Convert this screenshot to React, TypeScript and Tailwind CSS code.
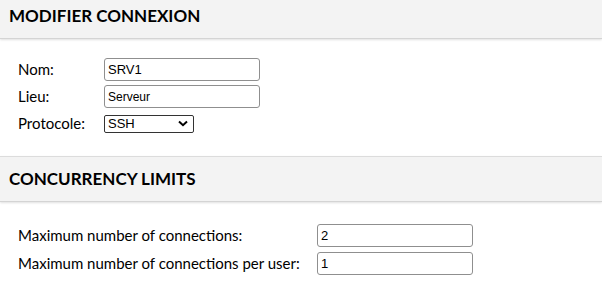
import React from "react";

function Field({ value, width, small }: { value: string; width: string; small?: boolean }) {
  return (
    <input
      readOnly
      defaultValue={value}
      className={`${width} h-[23px] border border-[#8f8f8f] rounded-[3px] bg-white px-[3px] text-black font-['Liberation_Sans',Arial,sans-serif] ${small ? "text-[12px]" : "text-[13px]"} outline-none`}
    />
  );
}

export default function App() {
  return (
    <div className="w-[602px] h-[291px] bg-white overflow-hidden font-['Lato',sans-serif] text-black">
      <div className="h-[39px] bg-[#f3f3f3] border-b border-[#d4d4d4] shadow-[0_1px_2px_rgba(0,0,0,0.12)] flex items-center px-[9px] pb-[6px]">
        <h2 className="text-[17px] font-bold uppercase">Modifier connexion</h2>
      </div>
      <div className="pt-[17px] pb-[19px] pl-[18px]">
        <div className="flex items-center h-[27px]">
          <div className="w-[86px] text-[15px]">Nom:</div>
          <Field value="SRV1" width="w-[156px]" />
        </div>
        <div className="flex items-center h-[27px]">
          <div className="w-[86px] text-[15px]">Lieu:</div>
          <Field value="Serveur" width="w-[156px]" small />
        </div>
        <div className="flex items-center h-[27px]">
          <div className="w-[86px] text-[15px]">Protocole:</div>
          <div className="w-[90px] h-[18px] border border-[#333] rounded-[2px] flex items-center justify-between pl-[3px] pr-[5px] font-['Liberation_Sans',Arial,sans-serif] text-[13px]">
            <span>SSH</span>
            <svg width="10" height="7" viewBox="0 0 10 7">
              <path d="M1 1.5 L5 5.2 L9 1.5" fill="none" stroke="#000" strokeWidth="2" />
            </svg>
          </div>
        </div>
      </div>
      <div className="h-[46px] bg-[#f3f3f3] border-t border-[#dcdcdc] border-b border-b-[#d4d4d4] shadow-[0_1px_2px_rgba(0,0,0,0.12)] flex items-center px-[9px]">
        <h2 className="text-[17px] font-bold uppercase">Concurrency limits</h2>
      </div>
      <div className="pt-[19px] pl-[18px]">
        <div className="flex items-center h-[28px]">
          <div className="w-[299px] text-[15px]">Maximum number of connections:</div>
          <Field value="2" width="w-[156px]" />
        </div>
        <div className="flex items-center h-[28px]">
          <div className="w-[299px] text-[15px]">Maximum number of connections per user:</div>
          <Field value="1" width="w-[156px]" />
        </div>
      </div>
    </div>
  );
}
